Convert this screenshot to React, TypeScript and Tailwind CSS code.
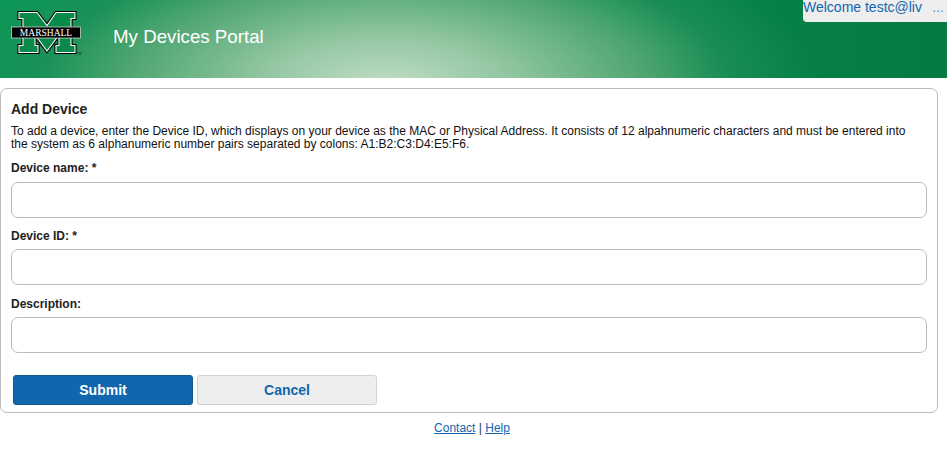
const M_PATH = "M9 2.500h18l10 13 9-13h19v6h-4v27h4v7H46v-7h3V25L37 41 25 25v10.500h3v7H9v-7h4v-27H9z";

function MarshallLogo() {
	return (
		<svg width="74" height="48" viewBox="0 0 74 48" className="shrink-0">
			<path d={M_PATH} fill="#000" stroke="#000" strokeWidth="3.200" strokeLinejoin="miter" />
			<path d={M_PATH} fill="#0a8a4a" stroke="#f2f7f3" strokeWidth="1.100" />
			<rect x="1.500" y="17" width="69" height="11" fill="#000" stroke="#dfe8e1" strokeWidth="0.700" />
			<text
				x="36"
				y="26"
				textAnchor="middle"
				fill="#fff"
				fontSize="9.500"
				fontFamily="'Liberation Serif', serif"
			>
				MARSHALL
			</text>
			<text x="67" y="45" fill="#111" fontSize="3" fontFamily="'Liberation Sans', sans-serif">
				TM
			</text>
		</svg>
	);
}

function Field({ label, inputClass }: { label: string; inputClass: string }) {
	return (
		<div className="flex flex-col">
			<label className="h-[15px] text-[12px] leading-[15px] font-bold text-[#222]">{label}</label>
			<input className={`h-[36px] w-[916px] rounded-[7px] border border-[#bdbdbd] bg-white ${inputClass}`} />
		</div>
	);
}

export default function App() {
	return (
		<div className="relative h-[452px] w-[947px] overflow-hidden bg-white font-['Liberation_Sans',Arial,sans-serif]">
			<header className="flex h-[78px] items-start bg-[radial-gradient(ellipse_430px_170px_at_385px_85px,#c0ddc6_0%,#96c8a4_27%,#4fa672_60%,rgba(31,144,88,0.7)_80%,rgba(10,140,80,0)_100%),linear-gradient(90deg,#0c9655_0%,#0a8f50_45%,#047a41_100%)]">
				<div className="mt-[10px] ml-[10px]">
					<MarshallLogo />
				</div>
				<h1 className="mt-[26px] ml-[29px] text-[18.720px] leading-[22px] font-normal text-white">
					My Devices Portal
				</h1>
			</header>

			<div className="absolute top-0 right-0 flex h-[22px] w-[144px] items-baseline justify-between rounded-bl-[4px] bg-[#eeeeee] pr-[3px]">
				<span className="text-[14px] leading-[15px] text-[#1166ae]">Welcome testc@liv</span>
				<span className="text-[14px] leading-[15px] text-[#5b93c4]">...</span>
			</div>

			<main className="mt-[10px] h-[325px] w-[938px] rounded-[7px] border border-[#bdbdbd] px-[10px] pt-[12px]">
				<h2 className="text-[14px] leading-[17px] font-bold text-[#222]">Add Device</h2>
				<p className="mt-[7px] pr-[12px] text-[12px] leading-[13px] text-[#111]">
					To add a device, enter the Device ID, which displays on your device as the MAC or Physical Address. It consists of 12 alpahnumeric characters and must be entered into the system as 6 alphanumeric number pairs separated by colons: A1:B2:C3:D4:E5:F6.
				</p>
				<div className="mt-[10px] flex flex-col">
					<Field label="Device name: *" inputClass="mt-[6px]" />
					<div className="mt-[11px]">
						<Field label="Device ID: *" inputClass="mt-[5px]" />
					</div>
					<div className="mt-[12px]">
						<Field label="Description:" inputClass="mt-[5px]" />
					</div>
				</div>
				<div className="mt-[22px] ml-[2px] flex gap-[4px]">
					<button className="h-[30px] w-[180px] rounded-[3px] border border-[#0b5a94] bg-[#1166ae] text-[14px] font-bold text-white">
						Submit
					</button>
					<button className="h-[30px] w-[180px] rounded-[3px] border border-[#d2d2d2] bg-[#eeeeee] text-[14px] font-bold text-[#1166ae]">
						Cancel
					</button>
				</div>
			</main>

			<footer className="mt-[8px] w-[944px] text-center text-[12px] leading-[15px] text-[#333]">
				<a className="text-[#1166ae] underline">Contact</a> | <a className="text-[#1166ae] underline">Help</a>
			</footer>
		</div>
	);
}
